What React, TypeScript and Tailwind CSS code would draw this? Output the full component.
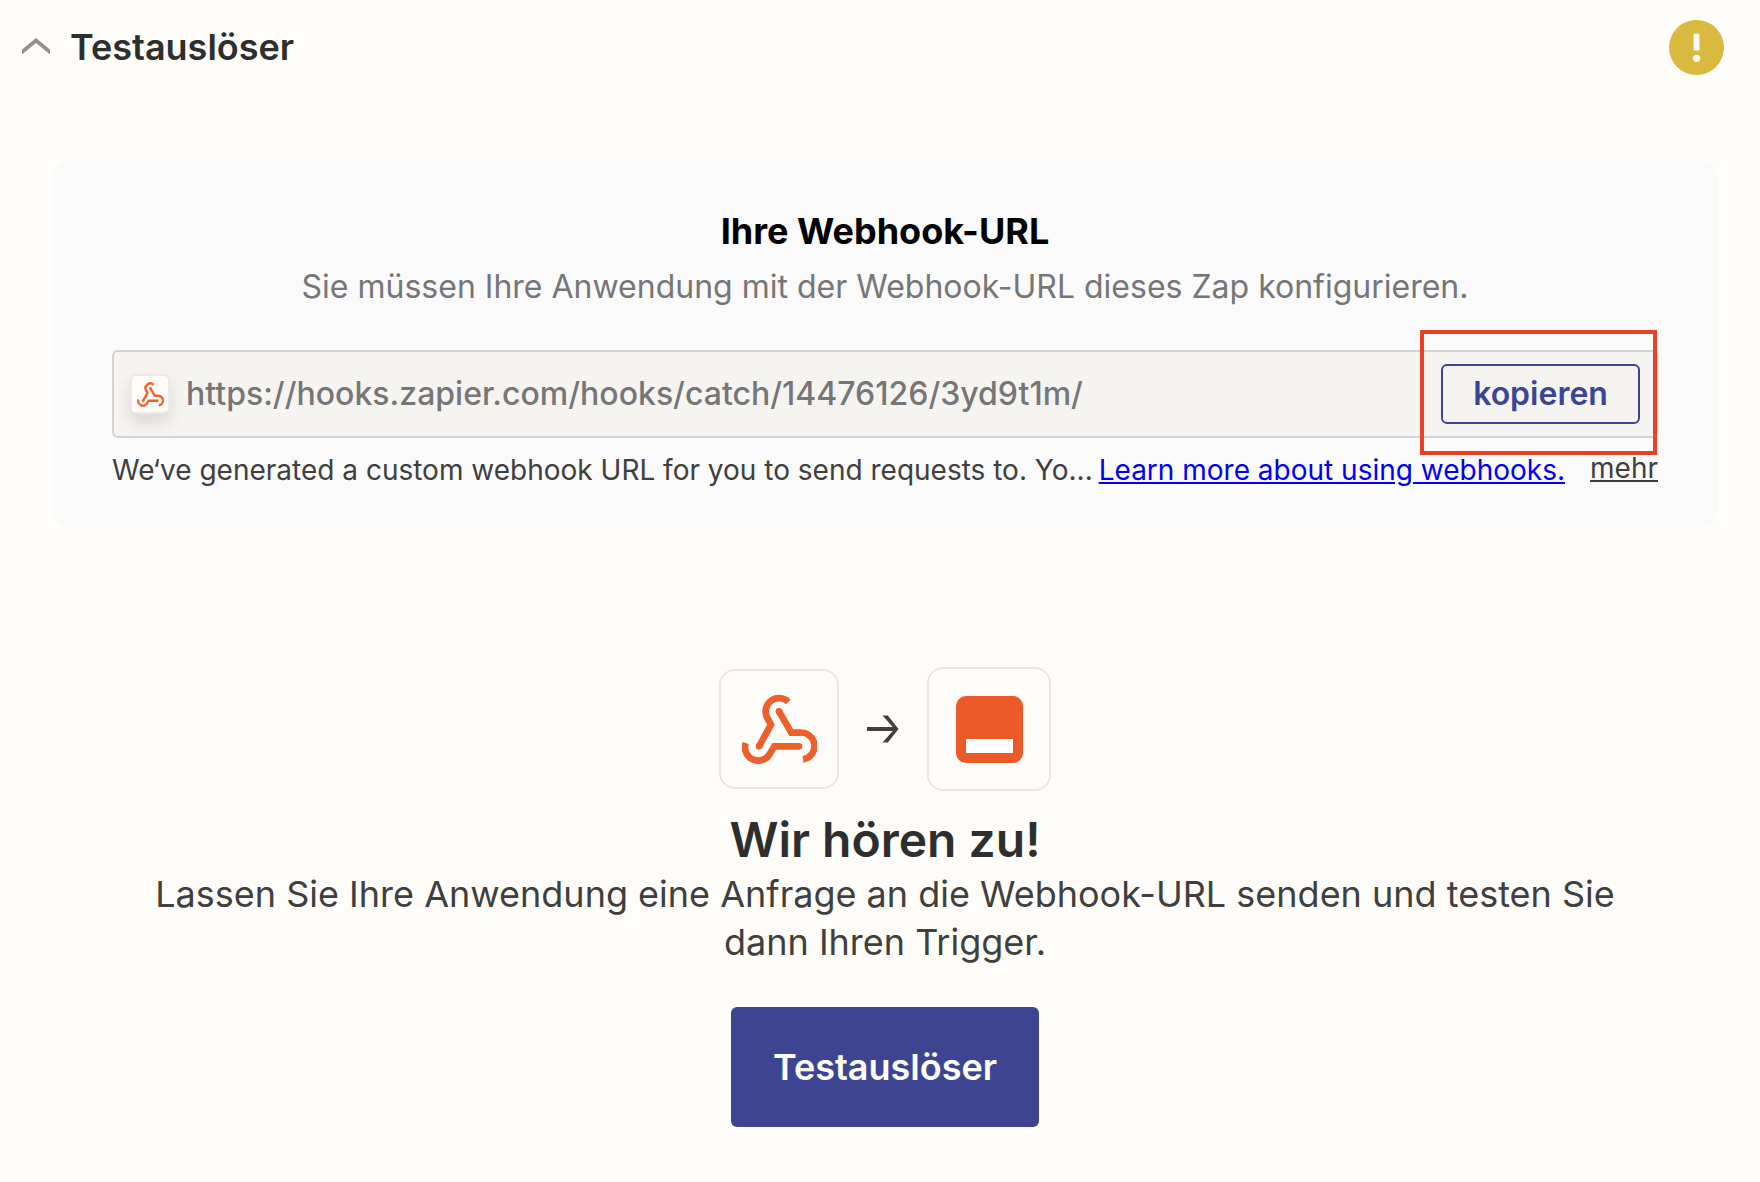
import type { ReactNode } from "react";

const WEBHOOK_URL = "https://hooks.zapier.com/hooks/catch/14476126/3yd9t1m/";

function WebhookIcon({ className }: { className: string }) {
  return (
    <svg viewBox="126 133 225 210" className={className} fill="none" stroke="currentColor" strokeWidth="20" aria-hidden="true">
      <path d="M265 157A40 40 0 0 0 202 205L213 225L177 290" />
      <path d="M237 185L274 249H297A40 40 0 0 1 309 329" />
      <path d="M297 290H223L211 310A40 40 0 0 1 137 280" />
      <g fill="currentColor" stroke="none">
        <circle cx="177" cy="290" r="10" />
        <circle cx="237" cy="185" r="10" />
        <circle cx="297" cy="290" r="10" />
      </g>
    </svg>
  );
}

function AppTile({ children, className }: { children: ReactNode; className: string }) {
  return (
    <div className={`flex items-center justify-center rounded-2xl border-2 border-[#e8e7e4] ${className}`}>
      {children}
    </div>
  );
}

function SectionHeader() {
  return (
    <header className="flex h-[94px] items-center justify-between pr-9 pl-[22px]">
      <button type="button" className="flex items-center gap-5" aria-expanded="true">
        <svg viewBox="0 0 28 18" className="h-[18px] w-7" aria-hidden="true">
          <path d="M0 11.500L14 0L28 11.500V16.500L14 5L0 16.500Z" fill="#95928e" />
        </svg>
        <span className="text-4xl font-semibold text-[#2d2e2e]">Testauslöser</span>
      </button>
      <svg viewBox="0 0 56 56" className="size-[55px]" role="img" aria-label="Warnung">
        <circle cx="28" cy="28" r="28" fill="#d9b93e" />
        <rect x="25" y="14" width="6" height="17" fill="#fffdf9" />
        <circle cx="28" cy="39" r="3.7" fill="#fffdf9" />
      </svg>
    </header>
  );
}

function WebhookCard() {
  return (
    <section className="mt-[66px] mr-[42px] ml-[52px] rounded-[20px] bg-[#fafafb] px-[60px] pt-[47px] pb-[38px]">
      <h2 className="text-center text-4xl leading-[48px] font-bold text-black">Ihre Webhook-URL</h2>
      <p className="mt-2 text-center text-[32px] leading-[48px] text-[#767676]">
        Sie müssen Ihre Anwendung mit der Webhook-URL dieses Zap konfigurieren.
      </p>

      <div className="relative mt-[39px] flex h-[88px] items-center rounded-md border-2 border-[#d4d3cf] bg-[#f6f4f1] px-4">
        <span className="flex size-10 shrink-0 items-center justify-center rounded-md border-2 border-[#ebe9e6] bg-[#fffdf9] text-[#f2622e] shadow-[0_8px_16px_rgba(0,0,0,0.12)]">
          <WebhookIcon className="h-[25px] w-[27px]" />
        </span>
        <input
          type="text"
          readOnly
          aria-label="Webhook-URL"
          value={WEBHOOK_URL}
          className="ml-4 min-w-0 flex-1 bg-transparent text-[32px] font-medium text-[#767676] outline-none"
        />
        <button
          type="button"
          className="h-[60px] w-[199px] shrink-0 rounded-md border-2 border-[#3d4592] text-[32px] leading-none font-semibold text-[#3d4592]"
        >
          kopieren
        </button>
        <div className="pointer-events-none absolute -top-[22px] -right-px h-[125px] w-[237px] border-4 border-[#e94126]" />
      </div>

      <div className="mt-3 flex text-[28px] leading-10 text-[#403f3e]">
        <p className="flex min-w-0 flex-1 gap-1.5 whitespace-nowrap">
          <span>We‘ve generated a custom webhook URL for you to send requests to. Yo...</span>
          <a href="#webhooks" className="text-[#0000ee] underline">
            Learn more about using webhooks.
          </a>
        </p>
        <button type="button" className="self-start leading-9 underline">
          mehr
        </button>
      </div>
    </section>
  );
}

function ListeningPanel() {
  return (
    <section className="mt-[139px] mr-[42px] ml-[52px] flex flex-col items-center pb-[54px] text-center">
      <div className="flex items-center gap-7">
        <AppTile className="size-[120px]">
          <WebhookIcon className="h-[70px] w-[75px] text-[#ed5f2b]" />
        </AppTile>
        <svg viewBox="0 0 33 28" className="h-7 w-8" aria-hidden="true">
          <path d="M0 12H26.500L16 0H21.500L32.500 14L21.500 28H16L26.500 16H0Z" fill="#403f3e" />
        </svg>
        <AppTile className="size-[124px]">
          <svg viewBox="0 0 67 67" className="size-[67px]" aria-hidden="true">
            <rect width="67" height="67" rx="10" fill="#ec5a29" />
            <rect x="10" y="43" width="47" height="14" fill="#fff" />
          </svg>
        </AppTile>
      </div>
      <h2 className="mt-[19px] text-5xl leading-[60px] font-semibold text-[#2d2e2e]">Wir hören zu!</h2>
      <p className="max-w-[1480px] text-4xl leading-[48px] text-[#403f3e]">
        Lassen Sie Ihre Anwendung eine Anfrage an die Webhook-URL senden und testen Sie dann Ihren Trigger.
      </p>
      <button
        type="button"
        className="mt-[41px] h-[120px] w-[308px] rounded-md bg-[#3d4592] text-4xl font-semibold text-[#fffdf9]"
      >
        Testauslöser
      </button>
    </section>
  );
}

export default function App() {
  return (
    <main className="min-h-screen bg-[#fffdf9] font-['Inter',sans-serif]">
      <SectionHeader />
      <WebhookCard />
      <ListeningPanel />
    </main>
  );
}
